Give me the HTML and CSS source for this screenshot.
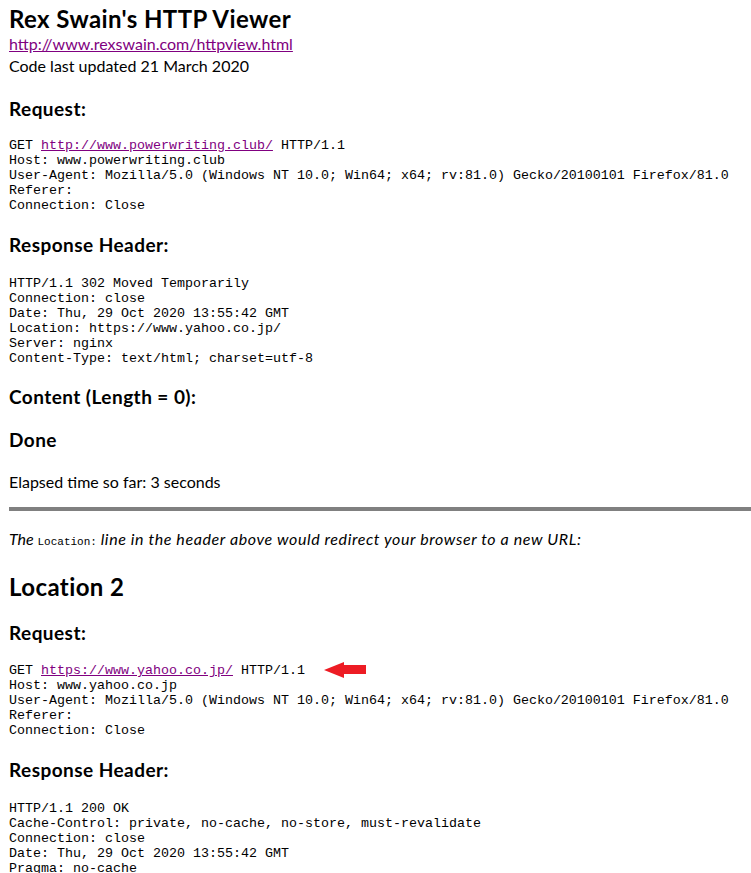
FILE: index.html
```html
<!DOCTYPE html>
<html>
<head>
<meta charset="utf-8">
<title>Rex Swain's HTTP Viewer</title>
<link rel="stylesheet" href="styles.css">
</head>
<body>
<h1 class="title">Rex Swain's HTTP Viewer</h1>
<div class="intro">
  <a class="link" href="#">http://www.rexswain.com/httpview.html</a><br>
  Code last updated 21 March 2020
</div>

<h3 class="sub">Request:</h3>
<pre class="code">GET <a class="link" href="#">http://www.powerwriting.club/</a> HTTP/1.1
Host: www.powerwriting.club
User-Agent: Mozilla/5.0 (Windows NT 10.0; Win64; x64; rv:81.0) Gecko/20100101 Firefox/81.0
Referer: 
Connection: Close</pre>

<h3 class="sub">Response Header:</h3>
<pre class="code code-resp">HTTP/1.1 302 Moved Temporarily
Connection: close
Date: Thu, 29 Oct 2020 13:55:42 GMT
Location: https://www.yahoo.co.jp/
Server: nginx
Content-Type: text/html; charset=utf-8</pre>

<h3 class="sub sub-after">Content (Length = 0):</h3>
<h3 class="sub">Done</h3>
<p class="text">Elapsed time so far: 3 seconds</p>

<hr class="rule">

<p class="note">The <code class="mono">Location:</code> <span class="note-rest">line in the header above would redirect your browser to a new URL:</span></p>

<h2 class="loc">Location 2</h2>

<h3 class="sub">Request:</h3>
<pre class="code">GET <a class="link" href="#">https://www.yahoo.co.jp/</a> HTTP/1.1<svg class="arrow" width="42" height="16" viewBox="0 0 42 16"><polygon points="0,8 20,0 20,3 42,3 42,12 20,12 20,16" fill="#ed1c24"/></svg>
Host: www.yahoo.co.jp
User-Agent: Mozilla/5.0 (Windows NT 10.0; Win64; x64; rv:81.0) Gecko/20100101 Firefox/81.0
Referer: 
Connection: Close</pre>

<h3 class="sub">Response Header:</h3>
<pre class="code code-resp">HTTP/1.1 200 OK
Cache-Control: private, no-cache, no-store, must-revalidate
Connection: close
Date: Thu, 29 Oct 2020 13:55:42 GMT
Pragma: no-cache
Content-Type: text/html; charset=UTF-8</pre>
</body>
</html>
```
FILE: styles.css
```css
html, body {
  margin: 0;
  padding: 0;
  background: #fff;
}
body {
  padding: 8px 0 0 9px;
  font-family: Lato, "Noto Sans", sans-serif;
  font-size: 16px;
  color: #000;
  overflow: hidden;
}
.title {
  font-size: 24px;
  line-height: 22px;
  letter-spacing: 0.4px;
  font-weight: bold;
  margin: 0;
}
.intro {
  line-height: 22px;
  margin: 3px 0 0 0;
}
.link {
  color: #800080;
  text-decoration: underline;
}
.sub {
  font-size: 19px;
  line-height: 22px;
  letter-spacing: 0.45px;
  font-weight: bold;
  margin: 21px 0 0 0;
}
.sub-after {
  margin-top: 20px;
}
.code {
  font-family: "Liberation Mono", "Courier New", monospace;
  font-size: 13.33px;
  line-height: 15px;
  margin: 18px 0 0 0;
}
.code-resp {
  margin-top: 20px;
}
.arrow {
  vertical-align: -4px;
  margin-left: 19px;
}
.text {
  margin: 20px 0 0 0;
  line-height: 22px;
}
.rule {
  border: 0;
  height: 4px;
  background: #808080;
  margin: 14px 0 0 0;
}
.note {
  font-style: italic;
  margin: 17px 0 0 0;
  line-height: 22px;
}
.note-rest {
  letter-spacing: 0.6px;
}
.mono {
  font-family: "Liberation Mono", "Courier New", monospace;
  font-size: 11px;
  font-style: normal;
}
.loc {
  font-size: 24px;
  line-height: 28px;
  letter-spacing: 0.4px;
  font-weight: bold;
  margin: 20px 0 0 0;
}
```
